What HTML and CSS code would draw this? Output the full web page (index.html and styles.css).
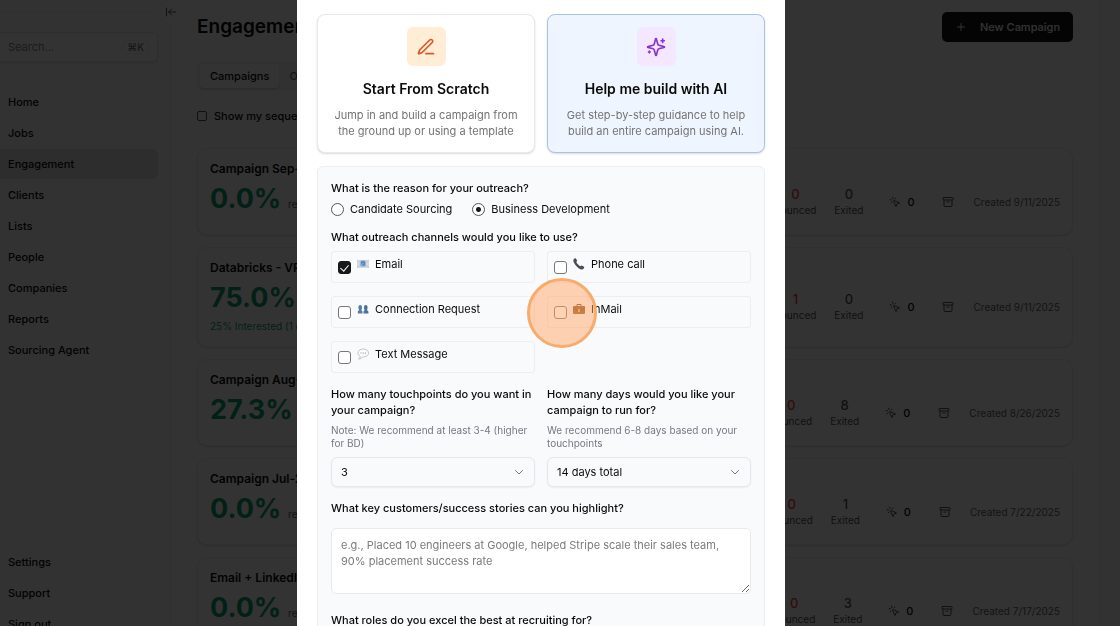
FILE: index.html
```html
<!DOCTYPE html>
<html lang="en">

<head>
    <meta charset="utf-8" />
    <title>Engagement</title>
    <link rel="stylesheet" href="styles.css">
</head>

<body>
    <!-- icons used more than once -->
    <svg class="sprite" aria-hidden="true">
        <symbol id="icon-click" viewBox="0 0 24 24">
            <path d="M14 4.1 12 6M5.1 8l-2.9-.8M6 12l-1.9 2M7.2 2.2 8 5.1" />
            <path d="M9.04 9.69a.5.5 0 0 1 .65-.65l11 4.5a.5.5 0 0 1-.07.95l-4.35 1.04a1 1 0 0 0-.74.74l-1.04 4.35a.5.5 0 0 1-.95.07z" />
        </symbol>
        <symbol id="icon-archive" viewBox="0 0 24 24">
            <rect x="2" y="3" width="20" height="5" rx="1" />
            <path d="M4 8v11a2 2 0 0 0 2 2h12a2 2 0 0 0 2-2V8M10 12h4" />
        </symbol>
        <symbol id="icon-chevron" viewBox="0 0 24 24">
            <path d="m5 9 7 7 7-7" />
        </symbol>
    </svg>

    <div class="app">
        <aside class="sidebar">
            <div class="sidebar-top">
                <button class="collapse" aria-label="Collapse sidebar">
                    <svg class="icon" viewBox="0 0 24 24"><path d="M3 4v16M21 12H8M13 6l-6 6 6 6" /></svg>
                </button>
            </div>
            <div class="search">
                <input type="text" placeholder="Search..." aria-label="Search">
                <kbd>⌘K</kbd>
            </div>
            <nav class="nav">
                <a href="#">Home</a>
                <a href="#">Jobs</a>
                <a href="#" class="active">Engagement</a>
                <a href="#">Clients</a>
                <a href="#">Lists</a>
                <a href="#">People</a>
                <a href="#">Companies</a>
                <a href="#">Reports</a>
                <a href="#">Sourcing Agent</a>
            </nav>
            <nav class="nav nav-bottom">
                <a href="#">Settings</a>
                <a href="#">Support</a>
                <a href="#">Sign out</a>
            </nav>
        </aside>

        <main class="main">
            <header class="page-header">
                <h1>Engagement</h1>
                <button class="new-campaign">
                    <svg class="icon" viewBox="0 0 24 24"><path d="M5 12h14M12 5v14" /></svg>
                    New Campaign
                </button>
            </header>
            <div class="tabs">
                <button class="tab tab-active">Campaigns</button>
                <button class="tab">Outreach</button>
            </div>
            <label class="filter"><input type="checkbox"> Show my sequences</label>

            <section class="campaigns">
                <article class="campaign">
                    <h2>Campaign Sep-11</h2>
                    <div class="campaign-row">
                        <div class="rate"><strong>0.0%</strong> <span>reply rate</span></div>
                        <div class="stat bounced"><b>0</b><span>Bounced</span></div>
                        <div class="stat"><b>0</b><span>Exited</span></div>
                        <div class="clicks"><svg class="icon"><use href="#icon-click" /></svg>0</div>
                        <svg class="icon archive"><use href="#icon-archive" /></svg>
                        <time>Created 9/11/2025</time>
                    </div>
                </article>
                <article class="campaign">
                    <h2>Databricks - VP Sales</h2>
                    <div class="campaign-row">
                        <div class="rate"><strong>75.0%</strong> <span>reply rate</span><p>25% Interested (1 of 4)</p></div>
                        <div class="stat bounced"><b>1</b><span>Bounced</span></div>
                        <div class="stat"><b>0</b><span>Exited</span></div>
                        <div class="clicks"><svg class="icon"><use href="#icon-click" /></svg>0</div>
                        <svg class="icon archive"><use href="#icon-archive" /></svg>
                        <time>Created 9/11/2025</time>
                    </div>
                </article>
                <article class="campaign">
                    <h2>Campaign Aug-26</h2>
                    <div class="campaign-row">
                        <div class="rate"><strong>27.3%</strong> <span>reply rate</span></div>
                        <div class="stat bounced"><b>0</b><span>Bounced</span></div>
                        <div class="stat"><b>8</b><span>Exited</span></div>
                        <div class="clicks"><svg class="icon"><use href="#icon-click" /></svg>0</div>
                        <svg class="icon archive"><use href="#icon-archive" /></svg>
                        <time>Created 8/26/2025</time>
                    </div>
                </article>
                <article class="campaign">
                    <h2>Campaign Jul-22</h2>
                    <div class="campaign-row">
                        <div class="rate"><strong>0.0%</strong> <span>reply rate</span></div>
                        <div class="stat bounced"><b>0</b><span>Bounced</span></div>
                        <div class="stat"><b>1</b><span>Exited</span></div>
                        <div class="clicks"><svg class="icon"><use href="#icon-click" /></svg>0</div>
                        <svg class="icon archive"><use href="#icon-archive" /></svg>
                        <time>Created 7/22/2025</time>
                    </div>
                </article>
                <article class="campaign">
                    <h2>Email + LinkedIn</h2>
                    <div class="campaign-row">
                        <div class="rate"><strong>0.0%</strong> <span>reply rate</span></div>
                        <div class="stat bounced"><b>0</b><span>Bounced</span></div>
                        <div class="stat"><b>3</b><span>Exited</span></div>
                        <div class="clicks"><svg class="icon"><use href="#icon-click" /></svg>0</div>
                        <svg class="icon archive"><use href="#icon-archive" /></svg>
                        <time>Created 7/17/2025</time>
                    </div>
                </article>
            </section>
        </main>
    </div>

    <div class="overlay">
        <div class="modal" role="dialog" aria-label="New campaign">
            <div class="two-cols">
                <button class="choice">
                    <span class="choice-icon orange">
                        <svg class="icon" viewBox="0 0 24 24"><path d="M12 20h9M16.4 3.6a2.1 2.1 0 0 1 3 3L7.4 18.6a2 2 0 0 1-.9.5l-2.8.9a.5.5 0 0 1-.7-.7l.9-2.8a2 2 0 0 1 .5-.9z" /></svg>
                    </span>
                    <span class="choice-title">Start From Scratch</span>
                    <span class="choice-text">Jump in and build a campaign from the ground up or using a template</span>
                </button>
                <button class="choice choice-selected">
                    <span class="choice-icon purple">
                        <svg class="icon" viewBox="0 0 24 24"><path d="M9.9 15.5a2 2 0 0 0-1.4-1.4l-6.1-1.6a.5.5 0 0 1 0-1l6.1-1.6a2 2 0 0 0 1.4-1.4l1.6-6.1a.5.5 0 0 1 1 0l1.6 6.1a2 2 0 0 0 1.4 1.4l6.1 1.6a.5.5 0 0 1 0 1l-6.1 1.6a2 2 0 0 0-1.4 1.4l-1.6 6.1a.5.5 0 0 1-1 0zM20 2.500v4M22 4.500h-4M4 17v2M5 18h-2" /></svg>
                    </span>
                    <span class="choice-title">Help me build with AI</span>
                    <span class="choice-text">Get step-by-step guidance to help build an entire campaign using AI.</span>
                </button>
            </div>

            <form class="panel">
                <p class="question">What is the reason for your outreach?</p>
                <div class="radios">
                    <label><input type="radio" name="reason"> Candidate Sourcing</label>
                    <label><input type="radio" name="reason" checked> Business Development</label>
                </div>

                <p class="question">What outreach channels would you like to use?</p>
                <div class="two-cols channels">
                    <label class="channel">
                        <input type="checkbox" checked>
                        <svg class="emoji" viewBox="0 0 12 12">
                            <rect x="0" y="2" width="12" height="8" fill="#d3dae1" />
                            <path d="M0 2l6 5 6-5M0 10l4-4M12 10 8 6" fill="none" stroke="#aebac6" stroke-width=".6" />
                            <rect x="3.500" y="2.500" width="5" height="6" fill="#7ba3cf" />
                            <path d="M4.500 5.500a1.500 1.500 0 1 1 1.500 1.500" fill="none" stroke="#3e6fa8" stroke-width="1" />
                        </svg>
                        Email
                    </label>
                    <label class="channel">
                        <input type="checkbox">
                        <svg class="emoji" viewBox="0 0 12 12">
                            <path d="M1 .8 2.400.3c.5 0 1.900 2.300 1.700 2.800L3.300 4.100c.6 1.500 2.400 3.400 4 4.200l1-.8c.6-.2 3 1.300 3 1.800l-.7 1.500c-.6.9-1.900 1-3.100.5C4.700 10.100 1.500 6.600.5 3.500.2 2.500.4 1.300 1 .8z" fill="#4a4d52" />
                        </svg>
                        Phone call
                    </label>
                    <label class="channel">
                        <input type="checkbox">
                        <svg class="emoji" viewBox="0 0 12 12">
                            <path d="M.8 10.500V9c0-1 .6-1.600 1.500-1.800C1 5.500 1 2 3.200 2s2.300 3.500 1 5.200C5 7.400 5.500 8 5.500 9v1.500z" fill="#547da3" />
                            <path d="M6.500 10.500V9c0-1 .6-1.600 1.300-1.800C6.500 5.500 6.600 2 8.800 2s2.300 3.500 1 5.200c1 .2 1.600.8 1.600 1.800v1.500z" fill="#4a7297" />
                        </svg>
                        Connection Request
                    </label>
                    <label class="channel">
                        <input type="checkbox">
                        <svg class="emoji" viewBox="0 0 12 12">
                            <path d="M4 3V1.500h4V3" fill="none" stroke="#6f4a2c" stroke-width="1" />
                            <rect x="0" y="3" width="12" height="8" rx="1" fill="#96582c" />
                            <path d="M0 4l4 3.500h4L12 4" fill="none" stroke="#6b3a19" stroke-width=".8" />
                            <rect x="5" y="6" width="2" height="3" fill="#dba85c" />
                        </svg>
                        InMail
                    </label>
                    <label class="channel">
                        <input type="checkbox">
                        <svg class="emoji" viewBox="0 0 12 12">
                            <path d="M6.200 1C3.200 1 1 2.700 1 5c0 1.500.9 2.700 2.300 3.400C3.200 9.500 2.400 10.400 1.600 11c1.700 0 3-.8 3.900-2h.7c3 0 5.300-1.700 5.300-4S9.200 1 6.200 1z" fill="#fcfcfc" stroke="#a9abae" stroke-width=".7" />
                            <path d="M3.500 5h1M5.700 5h1M7.900 5h1" stroke="#8c8e91" stroke-width="1" />
                        </svg>
                        Text Message
                    </label>
                </div>

                <div class="two-cols numbers">
                    <div class="field">
                        <label class="question" for="touchpoints">How many touchpoints do you want in your campaign?</label>
                        <p class="note">Note: We recommend at least 3-4 (higher for BD)</p>
                        <div class="select">
                            <select id="touchpoints">
                                <option>3</option>
                            </select>
                            <svg class="icon"><use href="#icon-chevron" /></svg>
                        </div>
                    </div>
                    <div class="field">
                        <label class="question" for="days">How many days would you like your campaign to run for?</label>
                        <p class="note">We recommend 6-8 days based on your touchpoints</p>
                        <div class="select">
                            <select id="days">
                                <option>14 days total</option>
                            </select>
                            <svg class="icon"><use href="#icon-chevron" /></svg>
                        </div>
                    </div>
                </div>

                <div class="field">
                    <label class="question" for="stories">What key customers/success stories can you highlight?</label>
                    <textarea id="stories" placeholder="e.g., Placed 10 engineers at Google, helped Stripe scale their sales team, 90% placement success rate"></textarea>
                </div>
                <div class="field">
                    <label class="question" for="roles">What roles do you excel the best at recruiting for?</label>
                    <textarea id="roles"></textarea>
                </div>
            </form>
            <div class="click-marker"></div>
        </div>
    </div>
</body>

</html>
```

FILE: styles.css
```css
* {
    box-sizing: border-box;
}

body {
    margin: 0;
    height: 100vh;
    overflow: hidden;
    background-color: #fafafa;
    color: #0a0a0a;
    font-family: Inter, sans-serif;
    font-size: 11px;
    line-height: 16px;
}

h1, h2, p {
    margin: 0;
}

button, input, select, textarea {
    font: inherit;
    color: inherit;
}

input {
    margin: 0;
}

.sprite {
    display: none;
}

.icon {
    width: 12px;
    height: 12px;
    flex: none;
    fill: none;
    stroke: currentColor;
    stroke-width: 2;
    stroke-linecap: round;
    stroke-linejoin: round;
}

/* page behind the dialog */

.app {
    display: flex;
    height: 100vh;
    padding-right: 20px;
}

.sidebar {
    display: flex;
    flex-direction: column;
    width: 171px;
    flex: none;
    padding-right: 12px;
    border-right: 1px solid #ececec;
}

.sidebar-top {
    height: 13px;
    flex: none;
    position: relative;
    border-bottom: 1px solid #efefef;
}

.collapse {
    position: absolute;
    top: 2px;
    right: -23px;
    display: flex;
    align-items: center;
    justify-content: center;
    width: 20px;
    height: 20px;
    padding: 0;
    border: 0;
    border-radius: 50%;
    background-color: white;
    color: #555;
}

.search {
    display: flex;
    align-items: center;
    height: 30px;
    flex: none;
    margin-top: 19px;
    padding: 0 8px;
    border: 1px solid #e5e5e5;
    border-left: 0;
    border-radius: 0 5px 5px 0;
    background-color: white;
    box-shadow: 0 1px 2px rgba(0, 0, 0, 0.1);
}

.search input {
    flex: 1;
    min-width: 0;
    padding: 0;
    border: 0;
    background: none;
}

.search input::placeholder {
    color: #8a8a8a;
}

.search kbd {
    padding: 0 4px;
    border: 1px solid #eee;
    border-radius: 4px;
    color: #666;
    font-family: inherit;
    font-size: 10px;
    line-height: 12px;
}

.nav {
    display: grid;
    gap: 1px;
    margin-top: 25px;
}

.nav-bottom {
    margin-top: 182px;
}

.nav a {
    padding: 7px 8px;
    border-radius: 0 5px 5px 0;
    color: inherit;
    font-weight: 500;
    text-decoration: none;
}

.nav .active {
    background-color: #e0e0e0;
}

.main {
    flex: 1;
    padding: 12px 26px 0;
    border-right: 1px solid #efefef;
    background-color: white;
}

.page-header {
    display: flex;
    align-items: center;
    justify-content: space-between;
}

h1 {
    font-size: 19px;
    font-weight: 600;
    line-height: 30px;
}

.new-campaign {
    display: flex;
    align-items: center;
    gap: 13px;
    height: 30px;
    padding: 0 13px;
    border: 0;
    border-radius: 5px;
    background-color: #18181b;
    color: white;
    font-weight: 500;
}

.tabs {
    display: inline-flex;
    margin-top: 19px;
    padding: 3px;
    border-radius: 5px;
    background-color: #f4f4f5;
}

.tab {
    padding: 4px 10px;
    border: 0;
    border-radius: 4px;
    background: none;
    color: #71717a;
    font-weight: 500;
}

.tab-active {
    background-color: white;
    color: #0a0a0a;
    box-shadow: 0 1px 2px rgba(0, 0, 0, 0.15);
}

.filter {
    display: flex;
    align-items: center;
    gap: 7px;
    margin-top: 17px;
    font-weight: 500;
}

.filter input {
    appearance: none;
    width: 10px;
    height: 10px;
    border: 1px solid #555;
    border-radius: 2px;
}

.campaigns {
    display: grid;
    gap: 12px;
    margin-top: 24px;
}

.campaign {
    padding: 12px;
    border: 1px solid #eee;
    border-radius: 10px;
    background-color: white;
    box-shadow: 0 1px 2px rgba(0, 0, 0, 0.15);
}

h2 {
    font-size: 12px;
    font-weight: 600;
    line-height: 16px;
}

.campaign-row {
    display: flex;
    align-items: center;
    min-height: 41px;
    margin-top: 4px;
}

.rate {
    flex: 1;
    align-self: flex-start;
    color: #666;
    font-size: 10px;
}

.rate strong {
    margin-right: 4px;
    color: #0d9f70;
    font-size: 27px;
    line-height: 36px;
}

.rate p {
    padding: 4px 0 2px;
    color: #0d9f70;
    line-height: 12px;
}

.stat {
    display: grid;
    justify-items: center;
    margin-right: 18px;
    color: #555;
    font-size: 10px;
}

.stat b {
    font-size: 13px;
    font-weight: 500;
}

.bounced b {
    color: #ef4444;
}

.clicks {
    display: flex;
    align-items: center;
    gap: 6px;
    margin: 0 28px 0 8px;
    font-weight: 500;
}

.clicks .icon,
.archive {
    color: #555;
}

.archive {
    margin-right: 19px;
}

time {
    color: #666;
    font-size: 10px;
}

/* dialog */

.overlay {
    position: fixed;
    inset: 0;
    display: flex;
    justify-content: center;
    padding-right: 38px;
    overflow: hidden;
    background-color: rgba(0, 0, 0, 0.8);
}

.modal {
    position: relative;
    width: 488px;
    padding: 14px 20px;
    background-color: white;
}

.two-cols {
    display: grid;
    grid-template-columns: 1fr 1fr;
    gap: 12px;
}

.choice {
    display: flex;
    flex-direction: column;
    align-items: center;
    padding: 12px 12px 13px;
    border: 1px solid #e8e8e8;
    border-radius: 8px;
    background-color: white;
    box-shadow: 0 1px 2px rgba(0, 0, 0, 0.15);
}

.choice-selected {
    border-color: #a9c3e3;
    background-color: #eff5ff;
}

.choice-icon {
    display: flex;
    align-items: center;
    justify-content: center;
    width: 39px;
    height: 39px;
    border-radius: 6px;
}

.choice-icon .icon {
    width: 20px;
    height: 20px;
}

.orange {
    background-color: #ffedd5;
    color: #dc5a26;
}

.purple {
    background-color: #f3e8ff;
    color: #8b35cf;
}

.choice-title {
    margin-top: 13px;
    font-size: 14px;
    font-weight: 600;
    line-height: 20px;
}

.choice-text {
    margin-top: 8px;
    color: #737373;
}

.panel {
    margin-top: 13px;
    padding: 13px;
    border: 1px solid #eceef0;
    border-radius: 6px;
    background-color: #f9fafc;
}

.question {
    display: block;
    font-weight: 500;
}

.radios {
    display: flex;
    gap: 20px;
    margin: 5px 0 12px;
}

.radios label {
    display: flex;
    align-items: center;
    gap: 6px;
}

.radios input {
    appearance: none;
    width: 13px;
    height: 13px;
    border: 1px solid #555;
    border-radius: 50%;
    background-color: white;
}

.radios input:checked {
    background-image: radial-gradient(circle, #18181b 2px, transparent 3px);
}

.channels {
    margin-top: 6px;
    row-gap: 13px;
}

.channel {
    display: flex;
    align-items: flex-start;
    height: 32px;
    padding: 4px 6px;
    border: 1px solid #eceef0;
    border-radius: 3px;
}

.channel input {
    appearance: none;
    width: 13px;
    height: 13px;
    margin: 5px 6px 0 0;
    border: 1px solid #777;
    border-radius: 3px;
    background-color: white;
}

.channel input:checked {
    display: flex;
    align-items: center;
    justify-content: center;
    border-color: #18181b;
    background-color: #18181b;
}

.channel input:checked::before {
    content: "";
    width: 4px;
    height: 7px;
    margin-bottom: 2px;
    border: solid white;
    border-width: 0 1px 1px 0;
    transform: rotate(40deg);
}

.emoji {
    width: 12px;
    height: 12px;
    margin: 2px 6px 0 0;
}

.numbers {
    margin: 13px 0;
}

.note {
    margin-top: 6px;
    color: #737985;
    font-size: 10px;
    line-height: 13px;
}

.select {
    display: grid;
    align-items: center;
    margin-top: 7px;
}

.select select,
.select .icon {
    grid-area: 1 / 1;
}

.select select {
    appearance: none;
    height: 30px;
    padding: 0 9px;
    border: 1px solid #e5e7ea;
    border-radius: 6px;
    background-color: #f9fafc;
    box-shadow: 0 1px 2px rgba(0, 0, 0, 0.06);
}

.select .icon {
    justify-self: end;
    margin-right: 10px;
    color: #777;
    pointer-events: none;
}

textarea {
    display: block;
    width: 100%;
    height: 66px;
    margin: 12px 0 18px;
    padding: 8px 9px;
    border: 1px solid #e8eaec;
    border-radius: 5px;
    background-color: white;
}

textarea::placeholder {
    color: #7b7b7b;
}

/* shows where the pointer was clicked */

.click-marker {
    position: absolute;
    top: 278px;
    left: 230px;
    width: 70px;
    height: 70px;
    border: 3px solid #f9ab6b;
    border-radius: 50%;
    background-color: rgba(255, 165, 100, 0.5);
}
```
